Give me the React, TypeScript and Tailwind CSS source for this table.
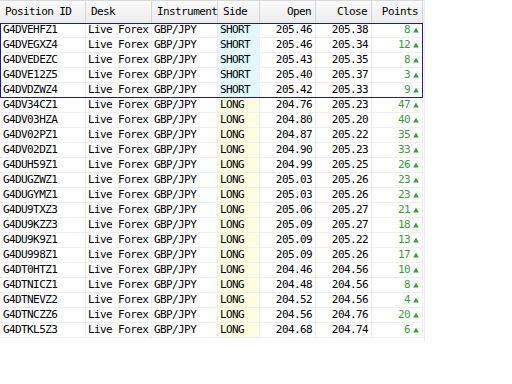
import React from 'react'

type Row = { id: string; side: 'SHORT' | 'LONG'; open: string; close: string; points: number }

const rows: Row[] = [
  { id: 'G4DVEHFZ1', side: 'SHORT', open: '205.46', close: '205.38', points: 8 },
  { id: 'G4DVEGXZ4', side: 'SHORT', open: '205.46', close: '205.34', points: 12 },
  { id: 'G4DVEDEZC', side: 'SHORT', open: '205.43', close: '205.35', points: 8 },
  { id: 'G4DVE12Z5', side: 'SHORT', open: '205.40', close: '205.37', points: 3 },
  { id: 'G4DVDZWZ4', side: 'SHORT', open: '205.42', close: '205.33', points: 9 },
  { id: 'G4DV34CZ1', side: 'LONG', open: '204.76', close: '205.23', points: 47 },
  { id: 'G4DV03HZA', side: 'LONG', open: '204.80', close: '205.20', points: 40 },
  { id: 'G4DV02PZ1', side: 'LONG', open: '204.87', close: '205.22', points: 35 },
  { id: 'G4DV02DZ1', side: 'LONG', open: '204.90', close: '205.23', points: 33 },
  { id: 'G4DUH59Z1', side: 'LONG', open: '204.99', close: '205.25', points: 26 },
  { id: 'G4DUGZWZ1', side: 'LONG', open: '205.03', close: '205.26', points: 23 },
  { id: 'G4DUGYMZ1', side: 'LONG', open: '205.03', close: '205.26', points: 23 },
  { id: 'G4DU9TXZ3', side: 'LONG', open: '205.06', close: '205.27', points: 21 },
  { id: 'G4DU9KZZ3', side: 'LONG', open: '205.09', close: '205.27', points: 18 },
  { id: 'G4DU9K9Z1', side: 'LONG', open: '205.09', close: '205.22', points: 13 },
  { id: 'G4DU998Z1', side: 'LONG', open: '205.09', close: '205.26', points: 17 },
  { id: 'G4DT0HTZ1', side: 'LONG', open: '204.46', close: '204.56', points: 10 },
  { id: 'G4DTNICZ1', side: 'LONG', open: '204.48', close: '204.56', points: 8 },
  { id: 'G4DTNEVZ2', side: 'LONG', open: '204.52', close: '204.56', points: 4 },
  { id: 'G4DTNCZZ6', side: 'LONG', open: '204.56', close: '204.76', points: 20 },
  { id: 'G4DTKL5Z3', side: 'LONG', open: '204.68', close: '204.74', points: 6 },
]

const cols = 'grid grid-cols-[86px_66px_66px_42px_56px_56px_51px]'
const font = "font-['DejaVu_Sans_Mono','Liberation_Mono',monospace] text-[11px] tracking-[-0.6px]"

function HeaderCell({ children, right }: { children: React.ReactNode; right?: boolean }) {
  return (
    <div
      className={`h-[22px] flex items-center border-r border-[#d5d5d5] ${
        right ? 'justify-end pr-[4px]' : 'pl-[5px]'
      }`}
    >
      {children}
    </div>
  )
}

function DataRow({ row }: { row: Row }) {
  const sideBg = row.side === 'SHORT' ? 'bg-[#e2f8fc]' : 'bg-[#fdfde2]'
  const cell = 'h-[15px] flex items-center border-r border-b border-[#eeeeee]'
  return (
    <div className={cols}>
      <div className={`${cell} pl-[3px]`}>{row.id}</div>
      <div className={`${cell} pl-[2px]`}>Live Forex</div>
      <div className={`${cell} pl-[2px]`}>GBP/JPY</div>
      <div className={`${cell} ${sideBg} pl-[2px]`}>{row.side}</div>
      <div className={`${cell} justify-end pr-[3px]`}>{row.open}</div>
      <div className={`${cell} justify-end pr-[3px]`}>{row.close}</div>
      <div className={`${cell} justify-end pr-[3px] gap-[3px] text-[#3c9c3c]`}>
        <span>{row.points}</span>
        <svg width="6" height="6" viewBox="0 0 6 6">
          <path d="M3 0.5 L5.8 5.5 L0.2 5.5 Z" fill="#3c9c3c" />
        </svg>
      </div>
    </div>
  )
}

export default function App() {
  return (
    <div className={`w-[512px] h-[384px] bg-white text-black ${font}`}>
      <div className="w-[425px] border-r border-[#ededed] pb-[4px]">
        <div className={`${cols} border-t border-[#d8d8d8] bg-gradient-to-b from-[#fafafa] to-[#ececec]`}>
          <HeaderCell>Position ID</HeaderCell>
          <HeaderCell>Desk</HeaderCell>
          <HeaderCell>Instrument</HeaderCell>
          <HeaderCell>Side</HeaderCell>
          <HeaderCell right>Open</HeaderCell>
          <HeaderCell right>Close</HeaderCell>
          <HeaderCell right>Points</HeaderCell>
        </div>
        <div className="relative">
          {rows.map((r) => (
            <DataRow key={r.id} row={r} />
          ))}
          <div className="absolute left-0 top-0 w-[423px] h-[75px] border border-[#1c1c8e] pointer-events-none" />
        </div>
      </div>
    </div>
  )
}
